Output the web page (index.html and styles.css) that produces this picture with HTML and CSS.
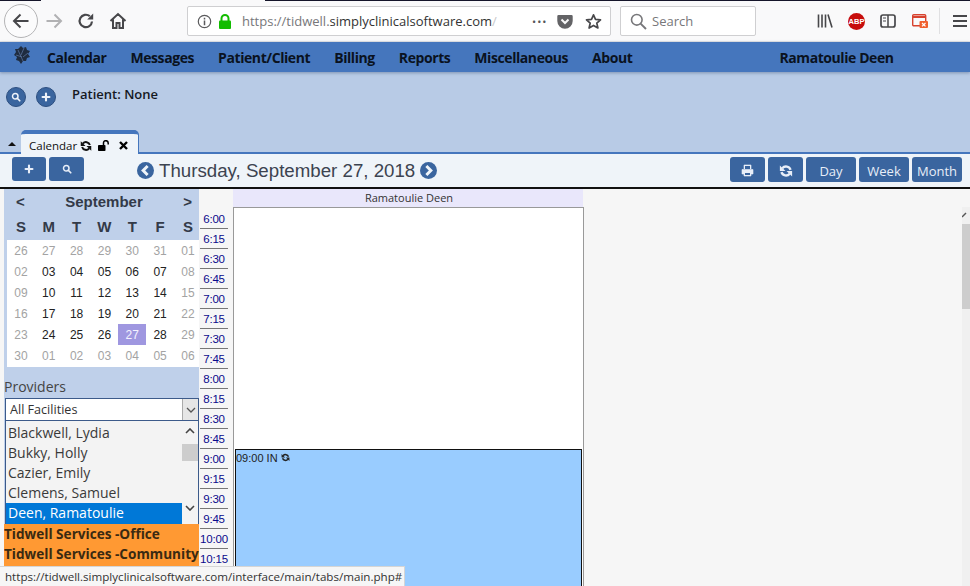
FILE: index.html
```html
<!DOCTYPE html>
<html lang="en">
<head>
    <meta charset="UTF-8">
    <title>Calendar</title>
    <link rel="stylesheet" href="styles.css">
</head>
<body>
    <svg class="icon-defs" width="0" height="0">
        <defs>
            <symbol id="i-refresh" viewBox="0 0 16 16">
                <path d="M13.2 6.6A5.4 5.4 0 0 0 3.8 4.9M2.8 9.4A5.4 5.4 0 0 0 12.2 11.1" fill="none" stroke="currentColor" stroke-width="2.7"/>
                <path d="M1 1.6V8H7.4ZM15 14.4V8H8.6Z" fill="currentColor"/>
            </symbol>
            <symbol id="i-search" viewBox="0 0 16 16">
                <circle cx="6.8" cy="6.8" r="4.4" fill="none" stroke="currentColor" stroke-width="2.4"/>
                <path d="M10 10L14 14" stroke="currentColor" stroke-width="2.8" stroke-linecap="round"/>
            </symbol>
            <symbol id="i-plus" viewBox="0 0 16 16">
                <path d="M8 2.5V13.5M2.5 8H13.5" stroke="currentColor" stroke-width="3.4" stroke-linecap="round"/>
            </symbol>
            <symbol id="i-chev-left" viewBox="0 0 16 16">
                <circle cx="8" cy="8" r="8" fill="currentColor"/>
                <path d="M10 3.8L5.8 8L10 12.2" fill="none" stroke="#eff4f9" stroke-width="2.8"/>
            </symbol>
            <symbol id="i-chev-right" viewBox="0 0 16 16">
                <circle cx="8" cy="8" r="8" fill="currentColor"/>
                <path d="M6 3.8L10.2 8L6 12.2" fill="none" stroke="#eff4f9" stroke-width="2.8"/>
            </symbol>
        </defs>
    </svg>

    <div class="window-edge"><span class="edge-a"></span><span class="edge-b"></span><span class="edge-c"></span></div>

    <div class="browser-bar">
        <button class="nav-back">
            <svg width="20" height="20" viewBox="0 0 20 20"><path d="M17.5 10H3M9.5 3.5L3 10L9.5 16.5" fill="none" stroke="#47474a" stroke-width="2"/></svg>
        </button>
        <svg class="tool tool-forward" width="20" height="20" viewBox="0 0 20 20"><path d="M2.5 10H17M10.5 3.5L17 10L10.5 16.5" fill="none" stroke="#b1b1b3" stroke-width="2"/></svg>
        <svg class="tool tool-reload" width="18" height="18" viewBox="0 0 18 18"><path d="M15 9.5A6.2 6.2 0 1 1 12.8 4.2" fill="none" stroke="#47474a" stroke-width="2.2"/><path d="M16.2 1.6V7.6H10.2Z" fill="#47474a"/></svg>
        <svg class="tool tool-home" width="18" height="18" viewBox="0 0 18 18"><path d="M1.5 9L9 2L16.5 9M4 7.5V16H7.5V11H10.5V16H14V7.5" fill="none" stroke="#47474a" stroke-width="2"/></svg>

        <div class="url-bar">
            <svg class="url-info" width="15" height="15" viewBox="0 0 15 15"><circle cx="7.5" cy="7.5" r="6.2" fill="none" stroke="#5a5a5c" stroke-width="1.2"/><path d="M7.5 6.6V11.2M7.5 3.8V5.4" stroke="#5a5a5c" stroke-width="1.5"/></svg>
            <svg class="url-lock" width="14" height="15" viewBox="0 0 14 15"><path d="M3.5 7V4.5A3.5 3.5 0 0 1 10.5 4.5V7" fill="none" stroke="#12bc00" stroke-width="2"/><rect x="1" y="6.5" width="12" height="8.5" rx="1" fill="#12bc00"/></svg>
            <span class="url-text"><span class="url-faint">https://tidwell.</span>simplyclinicalsoftware.com<span class="url-fade">/</span></span>
            <span class="url-dots">•••</span>
            <svg class="url-pocket" width="16" height="15" viewBox="0 0 16 15"><path d="M1.5 1H14.5A1.2 1.2 0 0 1 15.7 2.2V7A7.7 7.7 0 0 1 .3 7V2.2A1.2 1.2 0 0 1 1.5 1Z" fill="#636366"/><path d="M4.5 5.5L8 9L11.5 5.5" fill="none" stroke="#f9f9fa" stroke-width="2"/></svg>
            <svg class="url-star" width="17" height="17" viewBox="0 0 17 17"><path d="M8.5 1.8L10.5 6.3L15.5 6.8L11.8 10.1L12.9 15L8.5 12.4L4.1 15L5.2 10.1L1.5 6.8L6.5 6.3Z" fill="none" stroke="#47474a" stroke-width="1.7" stroke-linejoin="round"/></svg>
        </div>

        <div class="search-bar">
            <svg width="17" height="17" viewBox="0 0 17 17"><circle cx="6.8" cy="6.8" r="5.3" fill="none" stroke="#77777a" stroke-width="1.6"/><path d="M10.6 10.6L16 16" stroke="#77777a" stroke-width="1.9"/></svg>
            <span>Search</span>
        </div>

        <svg class="tool tool-library" width="16" height="16" viewBox="0 0 16 16"><path d="M1.5 1.5V14.5M5 1.5V14.5M8.5 1.5V14.5M11 1.5L15 14.5" stroke="#47474a" stroke-width="1.6" fill="none"/></svg>
        <span class="abp">ABP</span>
        <svg class="tool tool-sidebar" width="16" height="16" viewBox="0 0 16 16"><rect x="1" y="2" width="14" height="12" rx="2" fill="none" stroke="#47474a" stroke-width="1.7"/><path d="M8 2V14" stroke="#47474a" stroke-width="1.5"/><path d="M3 5H6M3 8H6" stroke="#47474a" stroke-width="1.2"/></svg>
        <svg class="tool tool-popup" width="16" height="16" viewBox="0 0 16 16"><rect x=".7" y="1.7" width="13" height="11" rx="1" fill="none" stroke="#d7422e" stroke-width="1.4"/><path d="M1 4H13.5" stroke="#d7422e" stroke-width="2"/><rect x="7.5" y="8" width="8.5" height="7" rx="1" fill="#f0602e"/><path d="M10 10L13.5 13.4M13.5 10L10 13.4" stroke="#fff" stroke-width="1.2"/></svg>
        <span class="bar-divider"></span>
        <svg class="tool tool-menu" width="14" height="14" viewBox="0 0 14 14"><path d="M0 2H14M0 7H14M0 12H14" stroke="#47474a" stroke-width="2"/></svg>
    </div>

    <nav class="menu-bar">
        <svg class="menu-logo" width="18" height="18" viewBox="0 0 18 18"><path d="M8 0L10 2L13 1L14 4L17 5L15 8L17 11L14 12L13 15L10 15L8 18L6 15L3 14L4 11L1 9L3 6L2 3L5 3Z" fill="#1f2c40"/><path d="M5 4L10 15M11 2L8 9M3 9L9 11M15 7L10 11" stroke="#5e7aa6" stroke-width=".7" fill="none"/></svg>
        <a>Calendar</a>
        <a>Messages</a>
        <a>Patient/Client</a>
        <a>Billing</a>
        <a>Reports</a>
        <a>Miscellaneous</a>
        <a>About</a>
        <a class="menu-user">Ramatoulie Deen</a>
    </nav>

    <section class="patient-area">
        <div class="patient-row">
            <button class="round-btn"><svg width="10" height="10"><use href="#i-search"/></svg></button>
            <button class="round-btn"><svg width="10" height="10"><use href="#i-plus"/></svg></button>
            <span class="patient-label">Patient: None</span>
        </div>
        <div class="tab-strip">
            <span class="tab-toggle"></span>
            <div class="tab">
                <span>Calendar</span>
                <svg width="12" height="12"><use href="#i-refresh"/></svg>
                <svg class="tab-lock" width="12" height="11" viewBox="0 0 12 11"><rect x="0" y="5" width="7.5" height="6" rx=".8" fill="#000"/><path d="M5.5 5V3A2.3 2.3 0 0 1 10.2 3V4.5" fill="none" stroke="#000" stroke-width="1.5"/></svg>
                <svg class="tab-close" width="9" height="9" viewBox="0 0 9 9"><path d="M1 1L8 8M8 1L1 8" stroke="#000" stroke-width="2.4"/></svg>
            </div>
        </div>
    </section>

    <div class="cal-toolbar">
        <button class="cal-btn cal-btn-add"><svg width="10" height="10"><use href="#i-plus"/></svg></button>
        <button class="cal-btn cal-btn-find"><svg width="10" height="10"><use href="#i-search"/></svg></button>
        <svg class="date-arrow date-arrow-prev" width="17" height="17"><use href="#i-chev-left"/></svg>
        <span class="cal-date">Thursday, September 27, 2018</span>
        <svg class="date-arrow" width="17" height="17"><use href="#i-chev-right"/></svg>
        <div class="view-btns">
            <button class="cal-btn cal-btn-icon"><svg width="13" height="13" viewBox="0 0 13 13"><path d="M3 5V1H10V5M3 10H1V5.5H12V10H10M3 8H10V12H3Z" fill="#e8eef8" stroke="#e8eef8" stroke-width=".6"/><rect x="4" y="9" width="5" height="2" fill="#3a659f"/><rect x="4" y="2" width="5" height="3" fill="#3a659f"/></svg></button>
            <button class="cal-btn cal-btn-icon"><svg width="14" height="14"><use href="#i-refresh"/></svg></button>
            <button class="cal-btn cal-btn-view">Day</button>
            <button class="cal-btn cal-btn-view">Week</button>
            <button class="cal-btn cal-btn-view">Month</button>
        </div>
    </div>

    <main class="cal-main">
        <aside class="side-pane">
            <div class="mini-head">
                <span class="mini-arrow">&lt;</span>
                <span class="mini-month">September</span>
                <span class="mini-arrow">&gt;</span>
            </div>
            <div class="mini-week">
                <span>S</span><span>M</span><span>T</span><span>W</span><span>T</span><span>F</span><span>S</span>
            </div>
            <div class="mini-days">
                <span class="off">26</span><span class="off">27</span><span class="off">28</span><span class="off">29</span><span class="off">30</span><span class="off">31</span><span class="off">01</span>
                <span class="off">02</span><span>03</span><span>04</span><span>05</span><span>06</span><span>07</span><span class="off">08</span>
                <span class="off">09</span><span>10</span><span>11</span><span>12</span><span>13</span><span>14</span><span class="off">15</span>
                <span class="off">16</span><span>17</span><span>18</span><span>19</span><span>20</span><span>21</span><span class="off">22</span>
                <span class="off">23</span><span>24</span><span>25</span><span>26</span><span class="today">27</span><span>28</span><span class="off">29</span>
                <span class="off">30</span><span class="off">01</span><span class="off">02</span><span class="off">03</span><span class="off">04</span><span class="off">05</span><span class="off">06</span>
            </div>
            <div class="providers-title">Providers</div>
            <div class="facility-select">
                <span>All Facilities</span>
                <span class="select-drop"><svg width="10" height="6" viewBox="0 0 10 6"><path d="M1 1L5 5L9 1" fill="none" stroke="#555" stroke-width="1.3"/></svg></span>
            </div>
            <div class="provider-list">
                <ul>
                    <li>Blackwell, Lydia</li>
                    <li>Bukky, Holly</li>
                    <li>Cazier, Emily</li>
                    <li>Clemens, Samuel</li>
                    <li class="selected">Deen, Ramatoulie</li>
                </ul>
                <div class="list-scroll">
                    <svg width="10" height="6" viewBox="0 0 10 6"><path d="M1 5L5 1L9 5" fill="none" stroke="#444" stroke-width="1.6"/></svg>
                    <span class="list-thumb"></span>
                    <svg width="10" height="6" viewBox="0 0 10 6"><path d="M1 1L5 5L9 1" fill="none" stroke="#444" stroke-width="1.6"/></svg>
                </div>
            </div>
            <div class="facility-list">
                <div>Tidwell Services -Office</div>
                <div>Tidwell Services -Community</div>
            </div>
        </aside>

        <div class="time-col">
            <a>6:00</a><a>6:15</a><a>6:30</a><a>6:45</a>
            <a>7:00</a><a>7:15</a><a>7:30</a><a>7:45</a>
            <a>8:00</a><a>8:15</a><a>8:30</a><a>8:45</a>
            <a>9:00</a><a>9:15</a><a>9:30</a><a>9:45</a>
            <a>10:00</a><a>10:15</a>
        </div>

        <div class="day-col">
            <div class="day-head">Ramatoulie Deen</div>
            <div class="day-body">
                <div class="event">09:00 IN <svg width="9" height="9"><use href="#i-refresh"/></svg></div>
            </div>
        </div>

        <div class="page-scroll">
            <span class="page-scroll-up"><svg width="6" height="6" viewBox="0 0 6 6"><path d="M0 5L4 1" stroke="#555" stroke-width="1.5"/></svg></span>
            <span class="page-scroll-thumb"></span>
        </div>
    </main>

    <div class="status-tip">https://tidwell.simplyclinicalsoftware.com/interface/main/tabs/main.php#</div>
</body>
</html>
```

FILE: styles.css
```css
* {
    box-sizing: border-box;
}
html, body {
    height: 100%;
}
body {
    margin: 0;
    height: 586px;
    overflow: hidden;
    display: flex;
    flex-direction: column;
    position: relative;
    font-family: "Open Sans", Arial, sans-serif;
    background-color: #f6f6f6;
    color: #222;
}
button {
    border: none;
    padding: 0;
    font: inherit;
}
.icon-defs {
    position: absolute;
}

/* browser chrome */
.window-edge {
    height: 1px;
    display: flex;
    background-color: #f9f9fa;
}
.edge-a {
    width: 41px;
    background-color: #15152a;
}
.edge-b {
    width: 224px;
}
.edge-c {
    flex: 1;
    background-color: #15152a;
}
.browser-bar {
    height: 41px;
    display: flex;
    align-items: center;
    background-color: #f9f9fa;
    border-bottom: 1px solid #e6e6e8;
}
.nav-back {
    width: 34px;
    height: 34px;
    margin-left: 4px;
    border-radius: 50%;
    border: 1px solid #b4b4b6;
    background-color: #fbfbfc;
    display: flex;
    align-items: center;
    justify-content: center;
}
.tool {
    flex-shrink: 0;
}
.tool-forward {
    margin-left: 6px;
}
.tool-reload {
    margin-left: 13px;
}
.tool-home {
    margin-left: 14px;
}
.url-bar {
    width: 424px;
    height: 30px;
    margin-left: 60px;
    display: flex;
    align-items: center;
    background-color: #fff;
    border: 1px solid #cfcfd1;
    border-radius: 2px;
    font-size: 13px;
}
.url-info {
    margin-left: 9px;
}
.url-lock {
    margin-left: 6px;
}
.url-text {
    margin-left: 10px;
    width: 252px;
    white-space: nowrap;
    color: #333;
}
.url-faint {
    color: #77777a;
}
.url-fade {
    color: #c8c8ca;
}
.url-dots {
    margin-left: 38px;
    font-size: 11px;
    letter-spacing: 1px;
    color: #55555a;
}
.url-pocket {
    margin-left: 10px;
}
.url-star {
    margin-left: 12px;
}
.search-bar {
    width: 136px;
    height: 30px;
    margin-left: 9px;
    padding-left: 9px;
    display: flex;
    align-items: center;
    gap: 5px;
    background-color: #fff;
    border: 1px solid #cfcfd1;
    border-radius: 2px;
    font-size: 13px;
    color: #77777a;
}
.tool-library {
    margin-left: 61px;
}
.abp {
    width: 17px;
    height: 17px;
    margin-left: 15px;
    border-radius: 50%;
    background-color: #c70d0c;
    color: #fff;
    font: bold 7.5px/17px "Liberation Sans", sans-serif;
    text-align: center;
}
.tool-sidebar {
    margin-left: 15px;
}
.tool-popup {
    margin-left: 16px;
}
.bar-divider {
    width: 1px;
    height: 26px;
    margin-left: 11px;
    background-color: #e0e0e2;
}
.tool-menu {
    margin-left: 13px;
}

/* app menu */
.menu-bar {
    height: 30px;
    flex-shrink: 0;
    display: flex;
    align-items: center;
    gap: 24px;
    padding-left: 13px;
    background-color: #4576bd;
    font-size: 14px;
    font-weight: 700;
    letter-spacing: -.42px;
    color: #0a1220;
    box-shadow: 0 1px 3px rgba(40, 60, 100, .4);
    position: relative;
}
.menu-logo {
    margin-right: -8px;
    margin-top: -5px;
}
.menu-user {
    margin-left: 123px;
}

/* patient area */
.patient-area {
    height: 82px;
    flex-shrink: 0;
    display: flex;
    flex-direction: column;
    justify-content: space-between;
    background-color: #b8cbe6;
    border-bottom: 2px solid #4576bd;
}
.patient-row {
    display: flex;
    align-items: flex-start;
    padding: 15px 0 0 6px;
}
.round-btn {
    width: 20px;
    height: 20px;
    margin-right: 10px;
    border-radius: 50%;
    border: 1px solid #2d4f80;
    background-color: #3a659f;
    color: #eef3fa;
    display: flex;
    align-items: center;
    justify-content: center;
}
.patient-label {
    margin: -2px 0 0 6px;
    font-size: 13px;
    font-weight: 600;
    color: #15191f;
}
.tab-strip {
    display: flex;
    align-items: flex-end;
    margin-bottom: -2px;
}
.tab-toggle {
    width: 0;
    height: 0;
    margin: 0 5px 8px 8px;
    border-left: 4px solid transparent;
    border-right: 4px solid transparent;
    border-bottom: 4px solid #111;
    align-self: flex-end;
}
.tab {
    width: 117px;
    height: 24px;
    display: flex;
    align-items: center;
    padding: 3px 0 0 8px;
    font-family: "Open Sans", sans-serif;
    font-size: 11.5px;
    color: #111;
    background-color: #eff4f9;
    border-top: 4px solid #4576bd;
    border-radius: 5px 5px 0 0;
    box-shadow: 1px 0 0 #4576bd;
}
.tab svg {
    margin-left: 3px;
}
.tab-lock {
    margin-left: 6px !important;
}
.tab-close {
    margin-left: 9px !important;
}

/* calendar toolbar */
.cal-toolbar {
    height: 35px;
    flex-shrink: 0;
    display: flex;
    align-items: flex-start;
    padding: 3px 8px 0 12px;
    background-color: #eff4f9;
    border-bottom: 2px solid #111;
}
.cal-btn {
    height: 25px;
    border-radius: 3px;
    background-color: #3a659f;
    color: #e8eef8;
    font-family: "Open Sans", sans-serif;
    font-size: 13px;
    display: flex;
    align-items: center;
    justify-content: center;
}
.cal-btn-add {
    width: 34px;
    height: 24px;
}
.cal-btn-find {
    width: 35px;
    height: 24px;
    margin-left: 3px;
}
.date-arrow {
    color: #3a659f;
    margin: 5px 0 0 0;
    flex-shrink: 0;
}
.date-arrow-prev {
    margin-left: 53px;
}
.cal-date {
    margin: 1px 5px 0 5px;
    font-family: "Liberation Sans", Arial, sans-serif;
    font-size: 18.7px;
    line-height: 26px;
    color: #3c4350;
}
.view-btns {
    margin-left: auto;
    display: flex;
    gap: 3px;
}
.cal-btn-icon {
    width: 35px;
    padding-top: 2px;
}
.cal-btn-view {
    width: 50px;
    padding-top: 2px;
}

/* main calendar area */
.cal-main {
    flex: 1;
    min-height: 0;
    display: flex;
    overflow: hidden;
}
.side-pane {
    width: 195px;
    margin-left: 4px;
    flex-shrink: 0;
    background-color: #bfd0ea;
}
.mini-head {
    height: 24px;
    display: flex;
    justify-content: space-between;
    align-items: center;
    padding: 1px 7px 0 12px;
    font-family: "Liberation Sans", Arial, sans-serif;
    font-size: 15px;
    font-weight: 700;
    color: #333a48;
}
.mini-week {
    height: 27px;
    padding-left: 3px;
    display: grid;
    grid-template-columns: repeat(7, 27.83px);
    align-items: center;
    text-align: center;
    font-family: "Liberation Sans", Arial, sans-serif;
    font-size: 15px;
    font-weight: 700;
    color: #333a48;
    overflow: hidden;
}
.mini-days {
    margin-left: 3px;
    padding-bottom: 1px;
    display: grid;
    grid-template-columns: repeat(7, 27.83px);
    grid-auto-rows: 21px;
    background-color: #fff;
    font-family: "Liberation Sans", Arial, sans-serif;
    font-size: 12px;
    color: #222;
    overflow: hidden;
}
.mini-days span {
    display: flex;
    align-items: center;
    justify-content: center;
}
.mini-days .off {
    color: #a3a3a3;
}
.mini-days .today {
    background-color: #9f97e0;
    color: #f4f2ff;
}
.providers-title {
    height: 31px;
    padding: 11px 0 0;
    font-size: 14px;
    line-height: 18px;
    color: #444;
}
.facility-select {
    height: 23px;
    margin-left: 1px;
    width: 194px;
    display: flex;
    justify-content: space-between;
    align-items: center;
    padding-left: 4px;
    background-color: #fff;
    border: 1px solid #3c5a8a;
    font-size: 12.6px;
    color: #333;
}
.select-drop {
    width: 16px;
    height: 21px;
    display: flex;
    align-items: center;
    justify-content: center;
    background-color: #e6e6e6;
    border-left: 1px solid #aaa;
}
.provider-list {
    height: 103px;
    margin-left: 1px;
    width: 194px;
    display: flex;
    background-color: #f3f3f3;
    border: 1px solid #3c5a8a;
    border-top: none;
    border-bottom: none;
    font-size: 14px;
    color: #3a3a3a;
}
.provider-list ul {
    flex: 1;
    margin: 0;
    padding: 2px 0 0;
    list-style-type: none;
}
.provider-list li {
    height: 20px;
    line-height: 20px;
    padding-left: 2px;
}
.provider-list .selected {
    height: 21px;
    background-color: #0078d7;
    color: #fff;
}
.list-scroll {
    width: 16px;
    display: flex;
    flex-direction: column;
    align-items: center;
    padding-top: 7px;
}
.list-thumb {
    width: 16px;
    height: 17px;
    margin: 10px 0 44px;
    background-color: #cdcdcd;
}
.facility-list {
    height: 60px;
    background-color: #ff9933;
    font-size: 13.6px;
    font-weight: 700;
    line-height: 20px;
    color: #3a2a12;
    white-space: nowrap;
    overflow: hidden;
}
.time-col {
    width: 34px;
    flex-shrink: 0;
    padding-top: 20px;
    background-color: #f6f6f6;
    font-family: "Liberation Sans", Arial, sans-serif;
    font-size: 11.5px;
    letter-spacing: -.2px;
    color: #0a0a8c;
}
.time-col a {
    display: block;
    width: 28px;
    margin-left: 1px;
    height: 20px;
    line-height: 20px;
    text-align: center;
    border-bottom: 1px solid #777;
    white-space: nowrap;
}
.day-col {
    width: 351px;
    flex-shrink: 0;
    display: flex;
    flex-direction: column;
}
.day-head {
    height: 18px;
    margin-right: 1px;
    padding-left: 2px;
    text-align: center;
    font-size: 11px;
    line-height: 18px;
    color: #333;
    background-color: #e9e7fb;
}
.day-body {
    flex: 1;
    display: flex;
    flex-direction: column;
    padding: 241px 1px 0;
    background-color: #fff;
    border: 1px solid #999;
    border-bottom: none;
}
.event {
    flex: 1;
    font-family: "Liberation Sans", Arial, sans-serif;
    font-size: 11px;
    line-height: 16px;
    background-color: #99ccff;
    border: 1px solid #111;
    border-bottom: none;
    color: #222;
}
.page-scroll {
    width: 8px;
    margin: 18px 0 0 auto;
    display: flex;
    flex-direction: column;
    background-color: #f0f0f0;
}
.page-scroll-up {
    height: 17px;
    padding-top: 5px;
    line-height: 0;
}
.page-scroll-thumb {
    height: 85px;
    background-color: #cdcdcd;
}

/* link hover tip */
.status-tip {
    position: absolute;
    left: 0;
    bottom: 0;
    width: 405px;
    height: 20px;
    padding-left: 5px;
    font-size: 11.6px;
    line-height: 20px;
    color: #333;
    background-color: #f6f6f6;
    border-top: 1px solid #d5d5d5;
    border-right: 1px solid #d5d5d5;
    white-space: nowrap;
}
```
